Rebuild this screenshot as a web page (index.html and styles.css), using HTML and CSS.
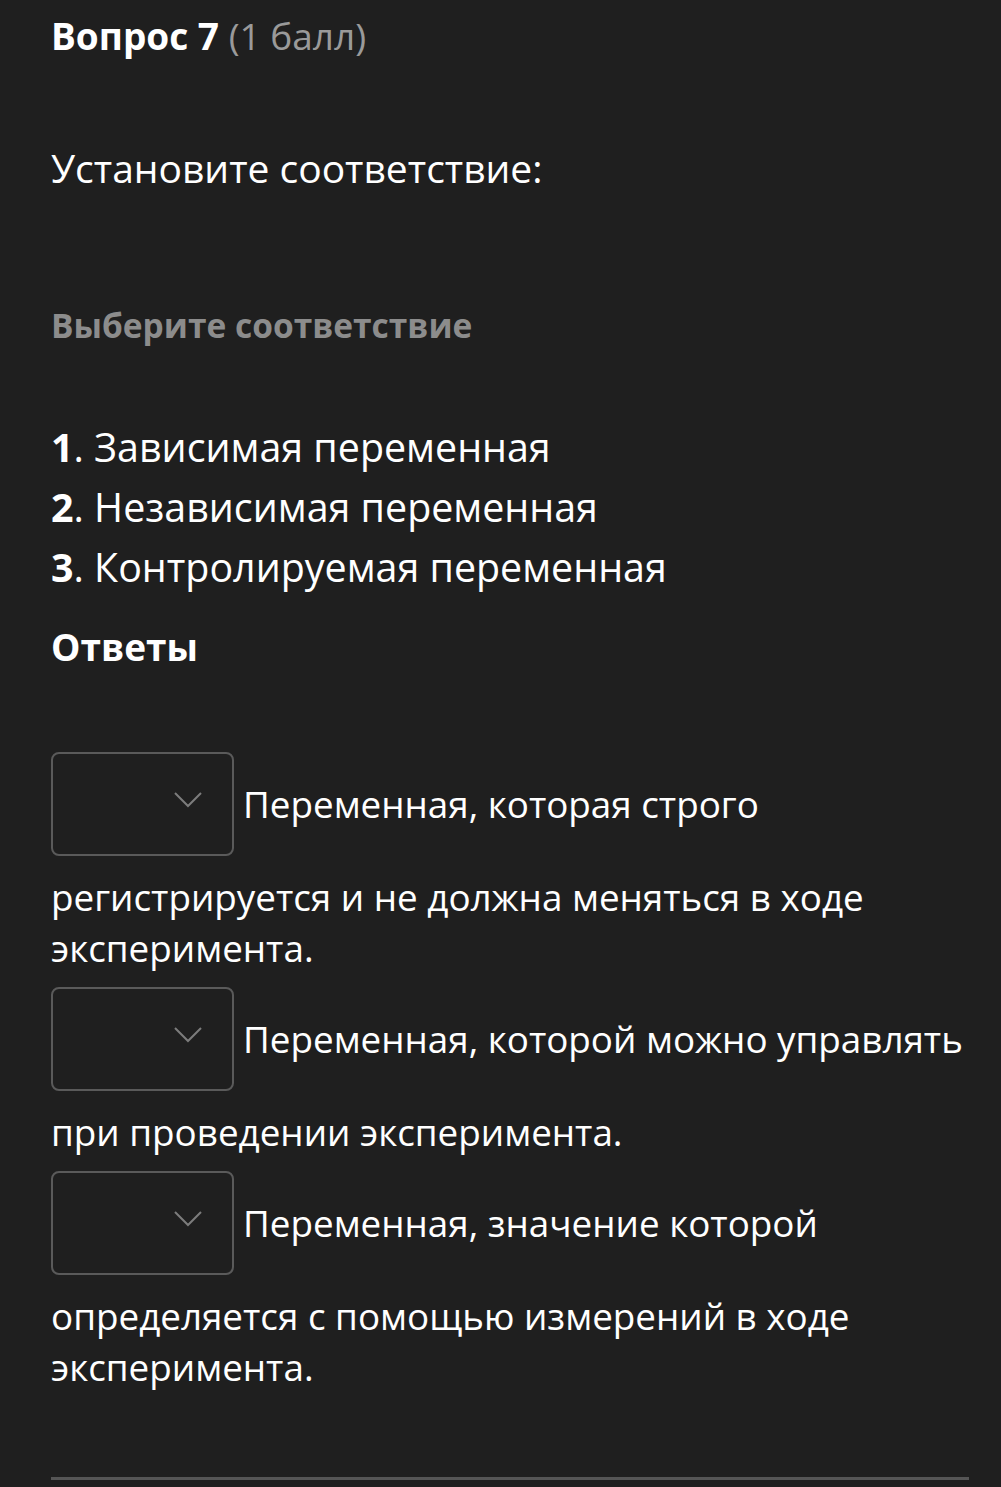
FILE: index.html
```html
<!DOCTYPE html>
<html lang="ru">
<head>
<meta charset="utf-8">
<link rel="stylesheet" href="styles.css">
</head>
<body>
<div class="page">
  <h1 class="title">Вопрос 7 <span class="points">(1 балл)</span></h1>
  <p class="question">Установите соответствие:</p>
  <h2 class="sub">Выберите соответствие</h2>
  <ol class="items">
    <li><b>1</b>. Зависимая переменная</li>
    <li><b>2</b>. Независимая переменная</li>
    <li><b>3</b>. Контролируемая переменная</li>
  </ol>
  <h2 class="answers-title">Ответы</h2>
  <div class="answers">
    <p class="answer"><span class="select"><svg class="chev" width="28" height="16" viewBox="0 0 28 16"><polyline points="1,1 14,14 27,1" fill="none" stroke="#7c7c7c" stroke-width="2"/></svg></span>Переменная, которая строго регистрируется и не должна меняться в ходе эксперимента.</p>
    <p class="answer"><span class="select"><svg class="chev" width="28" height="16" viewBox="0 0 28 16"><polyline points="1,1 14,14 27,1" fill="none" stroke="#7c7c7c" stroke-width="2"/></svg></span>Переменная, которой можно управлять при проведении эксперимента.</p>
    <p class="answer"><span class="select"><svg class="chev" width="28" height="16" viewBox="0 0 28 16"><polyline points="1,1 14,14 27,1" fill="none" stroke="#7c7c7c" stroke-width="2"/></svg></span>Переменная, значение которой определяется с помощью измерений в ходе эксперимента.</p>
  </div>
  <hr class="divider">
</div>
</body>
</html>
```

FILE: styles.css
```css
html, body {
  margin: 0;
  padding: 0;
  background: #1f1f1f;
}
body {
  font-family: "Open Sans", "DejaVu Sans", sans-serif;
  color: #ffffff;
}
.page {
  padding: 0 32px 0 51px;
}
.title {
  margin: 11px 0 0;
  font-size: 37px;
  line-height: 50px;
  font-weight: 700;
}
.points {
  font-weight: 400;
  color: #9a9a9a;
}
.question {
  margin: 82px 0 0;
  font-size: 39px;
  line-height: 50px;
}
.sub {
  margin: 110px 0 0;
  font-size: 33.5px;
  line-height: 44px;
  font-weight: 700;
  color: #8c8c8c;
}
.items {
  list-style: none;
  margin: 70px 0 0;
  padding: 0;
  font-size: 39.4px;
  line-height: 60px;
}
.items b {
  font-weight: 700;
}
.answers-title {
  margin: 25px 0 0;
  font-size: 37px;
  line-height: 50px;
  font-weight: 700;
}
.answers {
  margin-top: 72px;
}
.answer {
  margin: 0;
  font-size: 36.8px;
  line-height: 51px;
}
.answer + .answer {
  margin-top: 5px;
}
.select {
  display: inline-flex;
  box-sizing: border-box;
  width: 183px;
  height: 104px;
  border: 2px solid #5a5a5a;
  border-radius: 8px;
  vertical-align: middle;
  margin: 8px 9px 16px 0;
  justify-content: flex-end;
  align-items: center;
  padding: 0 30px 8px 0;
}
.chev {
  display: block;
}
.divider {
  margin: 84px 0 0;
  border: 0;
  height: 3px;
  background: #555555;
}
```
